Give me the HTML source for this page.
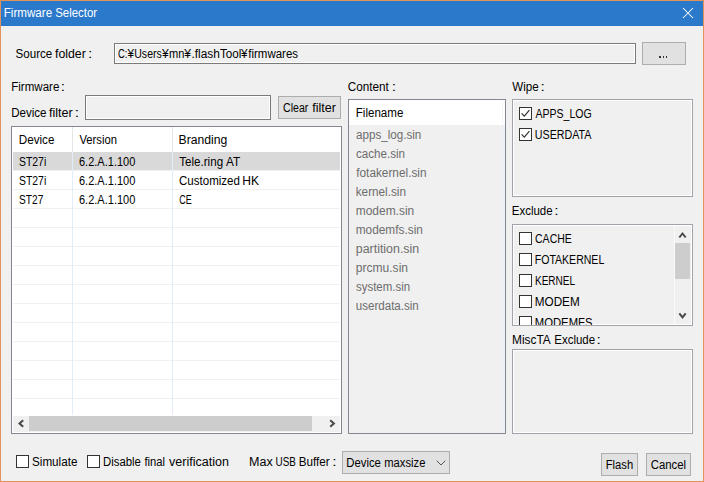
<!DOCTYPE html>
<html><head><meta charset="utf-8"><title>Firmware Selector</title>
<style>
html,body{margin:0;padding:0;}
body{width:704px;height:482px;position:relative;overflow:hidden;background:#f0f0f0;font-family:"Liberation Sans",sans-serif;font-size:12px;}
.a{position:absolute;box-sizing:border-box;}
.t{position:absolute;white-space:pre;line-height:14px;height:14px;transform-origin:0 0;font-size:12px;}
.btn{background:#e1e1e1;border:1px solid #adadad;}
.inp{background:#f0f0f0;border:1px solid #7a7a7a;box-shadow:inset 0 0 0 1px #fff;}
.cb{width:13px;height:13px;background:#fff;border:1px solid #333;}
.box{background:#f0f0f0;border:1px solid #a0a3a9;box-shadow:inset 0 0 0 1px #fff;}
.hl{height:1px;background:#f0f0f0;left:13px;width:327px;}
</style></head><body>

<div class="a" style="left:0;top:0;width:704px;height:482px;border:1px solid #e3925b;"></div>
<div class="a" style="left:1px;top:1px;width:702px;height:25px;background:#2a79cb;"></div>
<svg class="a" style="left:681px;top:6px" width="14" height="14" viewBox="0 0 14 14"><path d="M2 2 L12 12 M12 2 L2 12" stroke="#fff" stroke-width="1.05" fill="none"/></svg>
<div class="a inp" style="left:114px;top:43px;width:522px;height:21px;"></div>
<div class="a btn" style="left:642px;top:42px;width:44px;height:23px;"></div>
<div class="a" style="left:659.4px;top:56px;width:1.7px;height:2px;background:#333"></div><div class="a" style="left:662.5px;top:56px;width:1.7px;height:2px;background:#333"></div><div class="a" style="left:665.6px;top:56px;width:1.7px;height:2px;background:#333"></div>
<div class="a inp" style="left:85px;top:95px;width:186px;height:25px;"></div>
<div class="a btn" style="left:278px;top:96px;width:63px;height:23px;"></div>
<div class="a" style="left:11px;top:126px;width:331px;height:308px;background:#fff;border:1px solid #828790;"></div>
<div class="a" style="left:13px;top:152px;width:327px;height:18px;background:#d9d9d9;"></div>
<div class="a hl" style="top:170px"></div>
<div class="a hl" style="top:189px"></div>
<div class="a hl" style="top:208px"></div>
<div class="a hl" style="top:227px"></div>
<div class="a hl" style="top:246px"></div>
<div class="a hl" style="top:265px"></div>
<div class="a hl" style="top:284px"></div>
<div class="a hl" style="top:303px"></div>
<div class="a hl" style="top:322px"></div>
<div class="a hl" style="top:341px"></div>
<div class="a hl" style="top:360px"></div>
<div class="a hl" style="top:379px"></div>
<div class="a hl" style="top:398px"></div>
<div class="a" style="left:72px;top:127px;width:1px;height:25px;background:#e5e5e5"></div>
<div class="a" style="left:72px;top:152px;width:1px;height:263px;background:#e4ecf7"></div>
<div class="a" style="left:172px;top:127px;width:1px;height:25px;background:#e5e5e5"></div>
<div class="a" style="left:172px;top:152px;width:1px;height:263px;background:#e4ecf7"></div>
<div class="a" style="left:13px;top:416px;width:327px;height:16px;background:#f0f0f0"></div>
<div class="a" style="left:29px;top:416px;width:283px;height:15px;background:#cdcdcd"></div>
<svg class="a" style="left:12px;top:415px" width="17" height="17" viewBox="0 0 17 17"><path d="M11.2 5.2 L7.5 8.5 L11.2 11.8" stroke="#484848" stroke-width="2" fill="none"/></svg>
<svg class="a" style="left:323px;top:415px" width="17" height="17" viewBox="0 0 17 17"><path d="M7.2 5.2 L10.9 8.5 L7.2 11.8" stroke="#484848" stroke-width="2" fill="none"/></svg>
<div class="a" style="left:348px;top:99px;width:158px;height:335px;background:#f0f0f0;border:1px solid #828790;"></div>
<div class="a" style="left:349px;top:100px;width:156px;height:25px;background:#fff;"></div>
<div class="a" style="left:502px;top:101px;width:1px;height:24px;background:#f1f5fa;"></div>
<div class="a" style="left:502px;top:125px;width:3px;height:308px;background:#edf0f4;"></div>
<div class="a box" style="left:512px;top:99px;width:181px;height:98px;"></div>
<div class="a cb" style="left:519px;top:107px"></div>
<svg class="a" style="left:519px;top:107px" width="13" height="13" viewBox="0 0 13 13"><path d="M2.6 6.4 L5.3 9.2 L10.4 3.2" stroke="#333" stroke-width="1.2" fill="none"/></svg>
<div class="a cb" style="left:519px;top:128px"></div>
<svg class="a" style="left:519px;top:128px" width="13" height="13" viewBox="0 0 13 13"><path d="M2.6 6.4 L5.3 9.2 L10.4 3.2" stroke="#333" stroke-width="1.2" fill="none"/></svg>
<div class="a box" style="left:512px;top:224px;width:181px;height:102px;overflow:hidden"></div>
<div class="a cb" style="left:519px;top:232px;height:13px;"></div>
<div class="a cb" style="left:519px;top:253px;height:13px;"></div>
<div class="a cb" style="left:519px;top:274px;height:13px;"></div>
<div class="a cb" style="left:519px;top:295px;height:13px;"></div>
<div class="a cb" style="left:519px;top:316px;height:9px;border-bottom:none;"></div>
<div class="a" style="left:675px;top:243px;width:15px;height:36px;background:#cdcdcd"></div>
<svg class="a" style="left:674px;top:226px" width="17" height="17" viewBox="0 0 17 17"><path d="M5.3 11.5 L8.5 7.5 L11.7 11.5" stroke="#484848" stroke-width="2" fill="none"/></svg>
<svg class="a" style="left:674px;top:307px" width="17" height="17" viewBox="0 0 17 17"><path d="M5.3 6.3 L8.5 10.3 L11.7 6.3" stroke="#484848" stroke-width="2" fill="none"/></svg><div class="a" style="left:674px;top:226px;width:1px;height:98px;background:#fafafa"></div>
<div class="a box" style="left:512px;top:349px;width:181px;height:85px;"></div>
<div class="a cb" style="left:16px;top:455px"></div>
<div class="a cb" style="left:87px;top:455px"></div>
<div class="a btn" style="left:342px;top:451px;width:108px;height:23px;"></div>
<svg class="a" style="left:435px;top:458px" width="12" height="10" viewBox="0 0 12 10"><path d="M1.7 2.7 L6 7 L10.3 2.7" stroke="#555" stroke-width="1" fill="none"/></svg>
<div class="a btn" style="left:601px;top:453px;width:37px;height:23px;"></div>
<div class="a btn" style="left:646px;top:453px;width:45px;height:23px;"></div>
<div class="t" id="t0" style="left:0;top:6px;color:#fff;transform:translateX(3.75px) scaleX(0.9682);">Firmware</div>
<div class="t" id="t1" style="left:0;top:6px;color:#fff;transform:translateX(55.25px) scaleX(0.9492);">Selector</div>
<div class="t" id="t2" style="left:0;top:47px;color:#000;transform:translateX(15.50px) scaleX(0.9676);">Source</div>
<div class="t" id="t3" style="left:0;top:47px;color:#000;transform:translateX(55.00px) scaleX(1.0268);">folder</div>
<div class="t" id="t4" style="left:0;top:47px;color:#000;transform:translateX(88.12px) scaleX(1.3000);">:</div>
<div class="t" id="t5" style="left:0;top:47px;color:#000;transform:translateX(118.00px) scaleX(0.7871);">C:</div>
<div class="t" id="t6" style="left:0;top:47px;color:#000;transform:translateX(127.50px) scaleX(0.9793);">¥</div>
<div class="t" id="t7" style="left:0;top:47px;color:#000;transform:translateX(134.25px) scaleX(0.8788);">Users</div>
<div class="t" id="t8" style="left:0;top:47px;color:#000;transform:translateX(162.00px) scaleX(1.0092);">¥</div>
<div class="t" id="t9" style="left:0;top:47px;color:#000;transform:translateX(169.00px) scaleX(0.9232);">mn</div>
<div class="t" id="t10" style="left:0;top:47px;color:#000;transform:translateX(184.25px) scaleX(1.0119);">¥</div>
<div class="t" id="t11" style="left:0;top:47px;color:#000;transform:translateX(191.50px) scaleX(0.9892);">.flash</div>
<div class="t" id="t12" style="left:0;top:47px;color:#000;transform:translateX(220.00px) scaleX(0.9721);">Tool</div>
<div class="t" id="t13" style="left:0;top:47px;color:#000;transform:translateX(241.00px) scaleX(0.9793);">¥</div>
<div class="t" id="t14" style="left:0;top:47px;color:#000;transform:translateX(248.25px) scaleX(0.9583);">firmwares</div>
<div class="t" id="t15" style="left:0;top:80px;color:#000;transform:translateX(11.25px) scaleX(0.9611);">Firmware</div>
<div class="t" id="t16" style="left:0;top:80px;color:#000;transform:translateX(60.75px) scaleX(1.3000);">:</div>
<div class="t" id="t17" style="left:0;top:106px;color:#000;transform:translateX(11.25px) scaleX(0.9621);">Device</div>
<div class="t" id="t18" style="left:0;top:106px;color:#000;transform:translateX(49.00px) scaleX(1.0491);">filter</div>
<div class="t" id="t19" style="left:0;top:106px;color:#000;transform:translateX(74.67px) scaleX(1.3000);">:</div>
<div class="t" id="t20" style="left:0;top:101px;color:#000;transform:translateX(283.00px) scaleX(0.8823);">Clear</div>
<div class="t" id="t21" style="left:0;top:101px;color:#000;transform:translateX(312.25px) scaleX(1.0446);">filter</div>
<div class="t" id="t22" style="left:0;top:133px;color:#000;transform:translateX(18.75px) scaleX(0.9718);">Device</div>
<div class="t" id="t23" style="left:0;top:133px;color:#000;transform:translateX(79.50px) scaleX(0.9363);">Version</div>
<div class="t" id="t24" style="left:0;top:133px;color:#000;transform:translateX(178.50px) scaleX(1.0161);">Branding</div>
<div class="t" id="t25" style="left:0;top:155px;color:#000;transform:translateX(19.00px) scaleX(0.8678);">ST27i</div>
<div class="t" id="t26" style="left:0;top:155px;color:#000;transform:translateX(79.00px) scaleX(0.9174);">6.2.A.1.100</div>
<div class="t" id="t27" style="left:0;top:155px;color:#000;transform:translateX(179.25px) scaleX(0.9666);">Tele.ring</div>
<div class="t" id="t28" style="left:0;top:155px;color:#000;transform:translateX(226.00px) scaleX(0.9793);">AT</div>
<div class="t" id="t29" style="left:0;top:174px;color:#000;transform:translateX(19.00px) scaleX(0.8678);">ST27i</div>
<div class="t" id="t30" style="left:0;top:174px;color:#000;transform:translateX(79.00px) scaleX(0.9174);">6.2.A.1.100</div>
<div class="t" id="t31" style="left:0;top:174px;color:#000;transform:translateX(179.00px) scaleX(0.9615);">Customized</div>
<div class="t" id="t32" style="left:0;top:174px;color:#000;transform:translateX(242.25px) scaleX(1.0040);">HK</div>
<div class="t" id="t33" style="left:0;top:193px;color:#000;transform:translateX(19.00px) scaleX(0.8468);">ST27</div>
<div class="t" id="t34" style="left:0;top:193px;color:#000;transform:translateX(79.00px) scaleX(0.9174);">6.2.A.1.100</div>
<div class="t" id="t35" style="left:0;top:193px;color:#000;transform:translateX(179.25px) scaleX(0.7464);">CE</div>
<div class="t" id="t36" style="left:0;top:80px;color:#000;transform:translateX(347.75px) scaleX(0.9784);">Content</div>
<div class="t" id="t37" style="left:0;top:80px;color:#000;transform:translateX(391.63px) scaleX(1.3000);">:</div>
<div class="t" id="t38" style="left:0;top:106px;color:#000;transform:translateX(355.75px) scaleX(0.9637);">Filename</div>
<div class="t" id="t39" style="left:0;top:80px;color:#000;transform:translateX(512.25px) scaleX(0.9647);">Wipe</div>
<div class="t" id="t40" style="left:0;top:80px;color:#000;transform:translateX(540.57px) scaleX(1.3000);">:</div>
<div class="t" id="t41" style="left:0;top:107px;color:#000;transform:translateX(535.50px) scaleX(0.8775);">APPS_LOG</div>
<div class="t" id="t42" style="left:0;top:128px;color:#000;transform:translateX(534.75px) scaleX(0.8924);">USERDATA</div>
<div class="t" id="t43" style="left:0;top:204px;color:#000;transform:translateX(511.75px) scaleX(0.9567);">Exclude</div>
<div class="t" id="t44" style="left:0;top:204px;color:#000;transform:translateX(554.18px) scaleX(1.3000);">:</div>
<div class="t" id="t45" style="left:0;top:232px;color:#000;transform:translateX(535.00px) scaleX(0.8780);">CACHE</div>
<div class="t" id="t46" style="left:0;top:253px;color:#000;transform:translateX(534.75px) scaleX(0.8782);">FOTAKERNEL</div>
<div class="t" id="t47" style="left:0;top:274px;color:#000;transform:translateX(535.00px) scaleX(0.8353);">KERNEL</div>
<div class="t" id="t48" style="left:0;top:295px;color:#000;transform:translateX(534.75px) scaleX(0.9775);">MODEM</div>
<div class="t" id="t49" style="left:0;top:316px;color:#000;transform:translateX(534.75px) scaleX(0.9417);clip-path:inset(0 0 5px 0);">MODEMFS</div>
<div class="t" id="t50" style="left:0;top:333px;color:#000;transform:translateX(512.00px) scaleX(0.9896);">MiscTA</div>
<div class="t" id="t51" style="left:0;top:333px;color:#000;transform:translateX(554.25px) scaleX(0.9567);">Exclude</div>
<div class="t" id="t52" style="left:0;top:333px;color:#000;transform:translateX(596.42px) scaleX(1.3000);">:</div>
<div class="t" id="t53" style="left:0;top:455px;color:#000;transform:translateX(32.00px) scaleX(0.9727);">Simulate</div>
<div class="t" id="t54" style="left:0;top:455px;color:#000;transform:translateX(103.00px) scaleX(0.9472);">Disable</div>
<div class="t" id="t55" style="left:0;top:455px;color:#000;transform:translateX(144.50px) scaleX(0.9352);">final</div>
<div class="t" id="t56" style="left:0;top:455px;color:#000;transform:translateX(169.00px) scaleX(1.0441);">verification</div>
<div class="t" id="t57" style="left:0;top:455px;color:#000;transform:translateX(249.00px) scaleX(1.0440);">Max</div>
<div class="t" id="t58" style="left:0;top:455px;color:#000;transform:translateX(275.50px) scaleX(0.8240);">USB</div>
<div class="t" id="t59" style="left:0;top:455px;color:#000;transform:translateX(298.75px) scaleX(0.9727);">Buffer</div>
<div class="t" id="t60" style="left:0;top:455px;color:#000;transform:translateX(332.25px) scaleX(1.3000);">:</div>
<div class="t" id="t61" style="left:0;top:456px;color:#000;transform:translateX(346.25px) scaleX(0.9450);">Device</div>
<div class="t" id="t62" style="left:0;top:456px;color:#000;transform:translateX(384.25px) scaleX(0.9346);">maxsize</div>
<div class="t" id="t63" style="left:0;top:458px;color:#000;transform:translateX(605.75px) scaleX(0.9341);">Flash</div>
<div class="t" id="t64" style="left:0;top:458px;color:#000;transform:translateX(650.75px) scaleX(0.9477);">Cancel</div>
<div class="t" id="t65" style="left:0;top:128px;color:#6d6d6d;transform:translateX(356.00px) scaleX(0.9692);">apps_log.sin</div>
<div class="t" id="t66" style="left:0;top:147px;color:#6d6d6d;transform:translateX(356.00px) scaleX(0.9679);">cache.sin</div>
<div class="t" id="t67" style="left:0;top:166px;color:#6d6d6d;transform:translateX(356.25px) scaleX(0.9845);">fotakernel.sin</div>
<div class="t" id="t68" style="left:0;top:185px;color:#6d6d6d;transform:translateX(355.75px) scaleX(0.9772);">kernel.sin</div>
<div class="t" id="t69" style="left:0;top:204px;color:#6d6d6d;transform:translateX(355.75px) scaleX(0.9965);">modem.sin</div>
<div class="t" id="t70" style="left:0;top:223px;color:#6d6d6d;transform:translateX(355.75px) scaleX(0.9865);">modemfs.sin</div>
<div class="t" id="t71" style="left:0;top:242px;color:#6d6d6d;transform:translateX(355.75px) scaleX(1.0341);">partition.sin</div>
<div class="t" id="t72" style="left:0;top:261px;color:#6d6d6d;transform:translateX(355.75px) scaleX(1.0051);">prcmu.sin</div>
<div class="t" id="t73" style="left:0;top:280px;color:#6d6d6d;transform:translateX(356.00px) scaleX(0.9534);">system.sin</div>
<div class="t" id="t74" style="left:0;top:299px;color:#6d6d6d;transform:translateX(355.75px) scaleX(0.9642);">userdata.sin</div>
</body></html>
